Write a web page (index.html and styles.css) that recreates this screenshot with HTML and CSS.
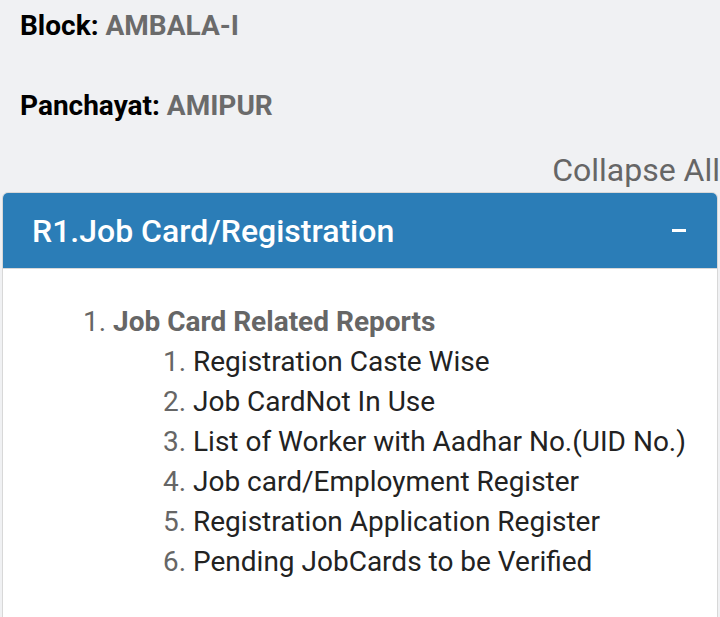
FILE: index.html
```html
<!DOCTYPE html>
<html lang="en">

<head>
    <meta charset="UTF-8">
    <meta name="viewport" content="width=device-width, initial-scale=1.0">
    <title>Reports</title>
    <link rel="stylesheet" href="styles.css">
</head>

<body>

    <div class="info">
        <p class="info-row"><b>Block:</b> <span class="value">AMBALA-I</span></p>
        <p class="info-row"><b>Panchayat:</b> <span class="value">AMIPUR</span></p>
    </div>

    <div class="toolbar">
        <a href="#" class="collapse-all">Collapse All</a>
    </div>

    <div class="panel">
        <div class="panel-heading">
            <span class="panel-title">R1.Job Card/Registration</span>
            <span class="panel-toggle"></span>
        </div>
        <div class="panel-body">
            <ol class="report-groups">
                <li>
                    <span class="group-title">Job Card Related Reports</span>
                    <ol class="report-list">
                        <li><a href="#">Registration Caste Wise</a></li>
                        <li><a href="#">Job CardNot In Use</a></li>
                        <li><a href="#">List of Worker with Aadhar No.(UID No.)</a></li>
                        <li><a href="#">Job card/Employment Register</a></li>
                        <li><a href="#">Registration Application Register</a></li>
                        <li><a href="#">Pending JobCards to be Verified</a></li>
                    </ol>
                </li>
            </ol>
        </div>
    </div>

</body>

</html>
```

FILE: styles.css
```css
body {
    font-family: Roboto, "Liberation Sans", sans-serif;
    background-color: #f0f1f3;
    margin: 0;
    padding: 0;
    overflow: hidden;
}

.info {
    padding: 6px 20px 0;
}

.info-row {
    margin: 0 0 40px;
    font-size: 28px;
    line-height: 40px;
    color: #000;
}

.info-row b {
    font-weight: 700;
}

.value {
    font-weight: 700;
    color: #6b6b6b;
}

.toolbar {
    margin-top: -16px;
    text-align: right;
    line-height: 40px;
    height: 40px;
    margin-bottom: 2px;
}

.collapse-all {
    font-size: 32px;
    color: #666;
    text-decoration: none;
}

.panel {
    margin: 0 2px;
    border: 1px solid #d8d8d8;
    border-radius: 6px;
    background-color: white;
    overflow: hidden;
}

.panel-heading {
    display: flex;
    justify-content: space-between;
    align-items: center;
    height: 75px;
    padding: 0 31px 0 29px;
    background-color: #2b7db7;
    color: white;
    border-bottom: 1px solid #d8d8d8;
}

.panel-title {
    font-size: 32px;
    font-weight: 500;
}

.panel-toggle {
    width: 14px;
    height: 3px;
    background-color: white;
}

.panel-body {
    padding: 33px 0 40px;
}

.report-groups {
    margin: 0;
    padding-left: 110px;
    font-size: 28px;
    line-height: 40px;
    color: #666;
}

.group-title {
    font-weight: 700;
    color: #666;
}

.report-list {
    margin: 0;
    padding-left: 80px;
}

.report-list a {
    color: #222;
    text-decoration: none;
}
```
